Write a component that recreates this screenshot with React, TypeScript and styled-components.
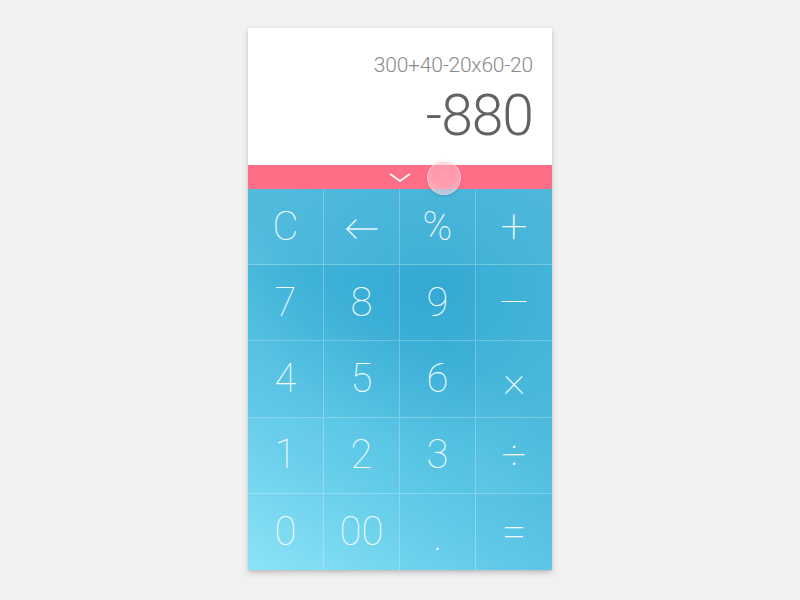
import React from "react";
import styled, { createGlobalStyle } from "styled-components";

const Global = createGlobalStyle`
  html, body { margin: 0; padding: 0; background: #f1f1f1; }
  body { font-family: Roboto, "Liberation Sans", sans-serif; }
`;

const Page = styled.div`
  display: flex;
  justify-content: center;
  padding-top: 28px;
  height: 600px;
  box-sizing: border-box;
`;

const Card = styled.div`
  width: 304px;
  height: 542px;
  display: flex;
  flex-direction: column;
  background: #fff;
  box-shadow: 0 3px 6px rgba(0, 0, 0, 0.18), 0 1px 2px rgba(0, 0, 0, 0.08);
`;

const Display = styled.div`
  height: 137px;
  display: flex;
  flex-direction: column;
  align-items: flex-end;
  padding: 24px 19px 0 0;
  box-sizing: border-box;
  background: #fff;
`;

const Expression = styled.div`
  font-size: 21px;
  font-weight: 300;
  color: #8a8a8a;
  line-height: 26px;
  letter-spacing: -0.2px;
`;

const Result = styled.div`
  font-size: 57px;
  font-weight: 300;
  color: #626262;
  line-height: 66px;
  margin-top: 5px;
  letter-spacing: -1px;
`;

const Bar = styled.div`
  position: relative;
  height: 24px;
  background: #fe6f87;
  display: flex;
  justify-content: center;
  align-items: center;
`;

const Knob = styled.div`
  position: absolute;
  left: 179px;
  top: -4px;
  width: 32px;
  height: 32px;
  border-radius: 50%;
  background: radial-gradient(circle at 50% 40%, rgba(255, 200, 210, 0.55), rgba(255, 170, 185, 0.5));
  border: 1px solid rgba(255, 255, 255, 0.45);
  box-shadow: 0 1px 3px rgba(0, 0, 0, 0.15), inset 0 -6px 6px rgba(255, 255, 255, 0.25);
  z-index: 2;
`;

const Grid = styled.div`
  flex: 1;
  display: grid;
  grid-template-columns: repeat(4, 1fr);
  grid-template-rows: repeat(5, 1fr);
  background:
    radial-gradient(ellipse 60% 40% at 60% 26%, rgba(25, 150, 200, 0.35) 0%, rgba(25, 150, 200, 0) 100%),
    linear-gradient(32deg, #8ae3f6 0%, #62cbe9 30%, #47b8dc 60%, #48b7da 100%);
`;

const Key = styled.div<{ $shade: number }>`
  display: flex;
  align-items: center;
  justify-content: center;
  color: #f4fbfe;
  font-family: Roboto, "Liberation Sans", sans-serif;
  font-weight: 100;
  font-size: 40px;
  border-right: 1px solid rgba(255, 255, 255, 0.25);
  border-bottom: 1px solid rgba(255, 255, 255, 0.25);
  background: ${(p) =>
    p.$shade > 0
      ? `rgba(20, 140, 190, ${p.$shade})`
      : `rgba(255, 255, 255, ${-p.$shade})`};
  &:nth-child(4n) { border-right: none; }
  &:nth-last-child(-n + 4) { border-bottom: none; }
`;

const Glyph = styled.span<{ $size?: number; $dy?: number; $weight?: number }>`
  font-size: ${(p) => p.$size ?? 40}px;
  font-weight: ${(p) => p.$weight ?? 100};
  position: relative;
  top: ${(p) => p.$dy ?? 0}px;
  line-height: 1;
`;

const Arrow = () => (
  <svg width="34" height="22" viewBox="0 0 34 22">
    <g fill="none" stroke="#f4fbfe" strokeWidth="1.4" strokeLinecap="round">
      <line x1="2" y1="11" x2="32" y2="11" />
      <polyline points="11,2 2,11 11,20" />
    </g>
  </svg>
);

const keys: { label: React.ReactNode; shade: number; size?: number; dy?: number; weight?: number }[] = [
  { label: "C", shade: -0.05 },
  { label: <Arrow />, shade: -0.05 },
  { label: "%", shade: -0.04 },
  { label: "+", shade: -0.04, size: 48 },
  { label: "7", shade: 0.07 },
  { label: "8", shade: 0.05 },
  { label: "9", shade: 0.06 },
  { label: "—", shade: 0.0, size: 38 },
  { label: "4", shade: 0.03 },
  { label: "5", shade: 0.01 },
  { label: "6", shade: 0.04 },
  { label: "×", shade: -0.02, size: 44 },
  { label: "1", shade: -0.02 },
  { label: "2", shade: 0.0 },
  { label: "3", shade: 0.02 },
  { label: "÷", shade: -0.02, size: 44 },
  { label: "0", shade: -0.02 },
  { label: "00", shade: -0.01 },
  { label: ".", shade: 0.02, size: 30, dy: 8, weight: 300 },
  { label: "=", shade: 0.03, size: 44 },
];

export default function App() {
  return (
    <>
      <Global />
      <Page>
        <Card>
          <Display>
            <Expression>300+40-20x60-20</Expression>
            <Result>-880</Result>
          </Display>
          <Bar>
            <svg width="24" height="14" viewBox="0 0 24 14">
              <polyline points="2,4 12,11 22,4" fill="none" stroke="#fff" strokeWidth="1.6" />
            </svg>
            <Knob />
          </Bar>
          <Grid>
            {keys.map((k, i) => (
              <Key key={i} $shade={k.shade}>
                <Glyph $size={k.size} $dy={k.dy} $weight={k.weight}>{k.label}</Glyph>
              </Key>
            ))}
          </Grid>
        </Card>
      </Page>
    </>
  );
}
